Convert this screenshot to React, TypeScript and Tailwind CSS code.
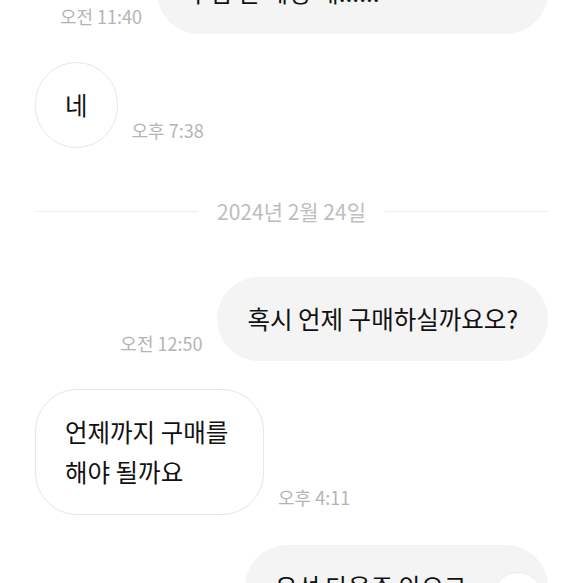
const font = "font-['Noto_Sans_CJK_KR','Noto_Sans',sans-serif]";

function Time({ children }: { children: React.ReactNode }) {
  return (
    <span className="shrink-0 whitespace-nowrap text-[18px] leading-none text-[#b4b4b4] mb-[9px]">
      {children}
    </span>
  );
}

function Mine({ text, time, className = '' }: { text: React.ReactNode; time?: string; className?: string }) {
  return (
    <div className={`flex justify-end items-end gap-[15px] ${className}`}>
      {time && <Time>{time}</Time>}
      <div className="max-w-[391px] break-keep rounded-[42px] bg-[#f4f4f4] px-[30px] py-[22px] text-[24.5px] leading-[40px] text-[#111]">
        {text}
      </div>
    </div>
  );
}

function Theirs({ text, time, className = '', maxW = 'max-w-[391px]' }: { text: React.ReactNode; time?: string; className?: string; maxW?: string }) {
  return (
    <div className={`flex justify-start items-end gap-[14px] ${className}`}>
      <div className={`${maxW} break-keep rounded-[42px] border border-[#e6e6e6] bg-white px-[29px] py-[22px] text-[24.5px] leading-[40px] text-[#111]`}>
        {text}
      </div>
      {time && <Time>{time}</Time>}
    </div>
  );
}

export default function App() {
  return (
    <div className={`relative w-[583px] h-[583px] overflow-hidden bg-white px-[35px] ${font}`}>
      <div className="flex flex-col">
        {/* previous message, mostly scrolled off */}
        <Mine
          className="-mt-[90px]"
          time="오전 11:40"
          text="그럼 혹시 구매 확정은 언제쯤 구입 한 계정 해......"
        />

        <Theirs className="mt-[28px]" time="오후 7:38" text="네" />

        {/* date divider */}
        <div className="mt-[53px] flex items-center gap-[19px]">
          <div className="h-px flex-1 bg-[#ededed]" />
          <span className="text-[21px] leading-none text-[#bdbdbd]">2024년 2월 24일</span>
          <div className="h-px flex-1 bg-[#ededed]" />
        </div>

        <Mine className="mt-[55px]" time="오전 12:50" text="혹시 언제 구매하실까요오?" />

        <Theirs
          className="mt-[28px]"
          maxW="max-w-[229px]"
          time="오후 4:11"
          text="언제까지 구매를 해야 될까요"
        />

        <div className="mt-[30px] flex justify-end">
          <div className="w-[303px] break-keep rounded-[42px] bg-[#f4f4f4] px-[30px] py-[22px] text-[24.5px] leading-[40px] text-[#111]">
            우선 다음주 안으로 구매해 주세요
          </div>
        </div>
      </div>

      {/* scroll-down button */}
      <div className="absolute left-[493px] top-[572px] h-[50px] w-[50px] rounded-full border border-[#ececec] bg-white" />
    </div>
  );
}
